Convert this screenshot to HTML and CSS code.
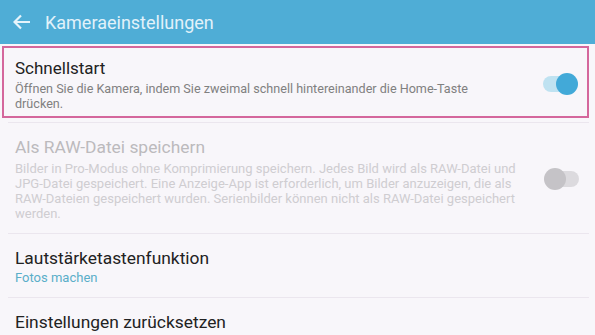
FILE: index.html
```html
<!DOCTYPE html>
<html lang="de">
<head>
    <meta charset="UTF-8">
    <meta name="viewport" content="width=device-width, initial-scale=1.0">
    <title>Kameraeinstellungen</title>
    <link rel="stylesheet" href="styles.css">
</head>
<body>
    <div class="header">
        <svg class="back" width="18" height="16" viewBox="0 0 18 16">
            <path d="M17 8H2M8 1.5L1.5 8L8 14.5" fill="none" stroke="#e6f4fb" stroke-width="2.2"/>
        </svg>
        <div class="header-title">Kameraeinstellungen</div>
    </div>
    <div class="list">
        <div class="item highlight">
            <div class="text">
                <div class="title">Schnellstart</div>
                <div class="desc">Öffnen Sie die Kamera, indem Sie zweimal schnell hintereinander die Home-Taste drücken.</div>
            </div>
            <div class="switch on"><span class="knob"></span></div>
        </div>
        <div class="item disabled">
            <div class="text">
                <div class="title">Als RAW-Datei speichern</div>
                <div class="desc">Bilder in Pro-Modus ohne Komprimierung speichern. Jedes Bild wird als RAW-Datei und JPG-Datei gespeichert. Eine Anzeige-App ist erforderlich, um Bilder anzuzeigen, die als RAW-Dateien gespeichert wurden. Serienbilder können nicht als RAW-Datei gespeichert werden.</div>
            </div>
            <div class="switch off"><span class="knob"></span></div>
        </div>
        <div class="item volume">
            <div class="text">
                <div class="title">Lautstärketastenfunktion</div>
                <div class="sub">Fotos machen</div>
            </div>
        </div>
        <div class="item last">
            <div class="text">
                <div class="title">Einstellungen zurücksetzen</div>
            </div>
        </div>
    </div>
</body>
</html>
```
FILE: styles.css
```css
body {
    margin: 0;
    background: #f8f6fa;
    font-family: Roboto, "Liberation Sans", sans-serif;
    width: 595px;
    height: 335px;
    overflow: hidden;
}
.header {
    height: 44px;
    background: #4fadd6;
    display: flex;
    align-items: center;
    padding-left: 13px;
    gap: 14px;
}
.header-title {
    color: #e2f2fa;
    font-size: 18px;
}
.list {
    padding: 2px 6px 0 2px;
}
.item {
    display: flex;
    align-items: center;
    margin-left: 6px;
    border-bottom: 1px solid #ebe6ee;
}
.item .text {
    flex: 1;
}
.item.highlight {
    margin: 0 0 4px 0;
    border: 2px solid #d4679c;
    padding: 9px 0 5px 11px;
}
.title {
    font-size: 17.4px;
    color: #222;
    line-height: 22px;
}
.highlight .title {
    font-size: 17px;
}
.desc {
    font-size: 13px;
    line-height: 15px;
    margin-top: 3px;
    padding-right: 12px;
}
.highlight .desc {
    font-size: 12.6px;
    color: #808080;
    margin-top: 2px;
    padding-right: 30px;
}
.disabled {
    border-top: 1px solid #ebe6ee;
    padding: 13px 0 12px 7px;
}
.disabled .title {
    color: #bcbabd;
}
.disabled .desc {
    color: #cfcdd1;
}
.volume {
    padding: 13px 0 11px 7px;
}
.sub {
    font-size: 13px;
    line-height: 16px;
    color: #5aaec9;
    margin-top: 1px;
}
.last {
    border-bottom: none;
    padding: 13px 0 0 7px;
}
.switch {
    position: relative;
    width: 34px;
    height: 16px;
    border-radius: 8px;
    flex: none;
}
.switch.on {
    background: #bfe2f1;
    margin-right: 10px;
}
.switch.off {
    background: #dcdade;
    margin-right: 10px;
}
.knob {
    position: absolute;
    top: -3px;
    width: 22px;
    height: 22px;
    border-radius: 50%;
}
.on .knob {
    right: -1px;
    background: #42a9d8;
}
.off .knob {
    left: -1px;
    background: #c5c3c7;
}
```
